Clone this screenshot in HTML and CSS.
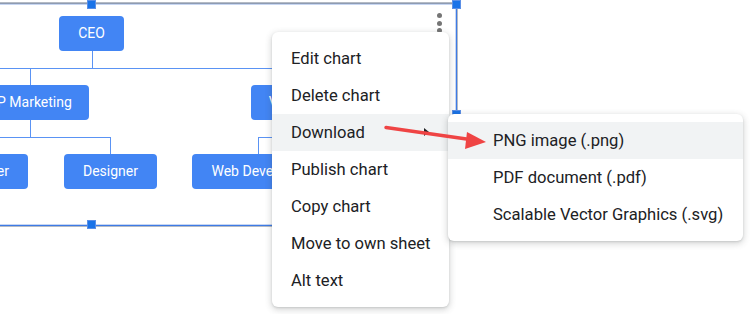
FILE: index.html
```html
<!DOCTYPE html>
<html lang="en">
<head>
    <meta charset="UTF-8">
    <title>Org chart - download menu</title>
    <link rel="stylesheet" href="styles.css">
</head>
<body>

    <div class="canvas">

        <!-- selected chart -->
        <div class="chart">
            <div class="line h" style="left: -300px; top: 68px; width: 640px;"></div>
            <div class="line v" style="left: 92px; top: 50px; height: 18px;"></div>
            <div class="line v" style="left: 30px; top: 68px; height: 17px;"></div>
            <div class="line v" style="left: 30px; top: 119px; height: 18px;"></div>
            <div class="line h" style="left: -60px; top: 137px; width: 171px;"></div>
            <div class="line v" style="left: 110px; top: 137px; height: 17px;"></div>
            <div class="line h" style="left: 258px; top: 137px; width: 120px;"></div>
            <div class="line v" style="left: 258px; top: 137px; height: 17px;"></div>

            <div class="node" style="left: 59px; top: 16px; width: 65px;">CEO</div>
            <div class="node" style="left: -29px; top: 85px; width: 118px;">VP Marketing</div>
            <div class="node" style="left: 251px; top: 85px; width: 130px;">VP Engineering</div>
            <div class="node" style="left: -72px; top: 154px; width: 100px;">Developer</div>
            <div class="node" style="left: 64px; top: 154px; width: 93px;">Designer</div>
            <div class="node" style="left: 192px; top: 154px; width: 132px;">Web Developer</div>

            <div class="frame"></div>
            <div class="handle" style="left: 87px; top: 0;"></div>
            <div class="handle" style="left: 452px; top: 0;"></div>
            <div class="handle" style="left: 452px; top: 110px;"></div>
            <div class="handle" style="left: 87px; top: 220px;"></div>

            <div class="kebab">
                <span></span><span></span><span></span>
            </div>
        </div>

        <!-- chart menu -->
        <ul class="menu">
            <li>Edit chart</li>
            <li>Delete chart</li>
            <li class="active has-sub">Download</li>
            <li>Publish chart</li>
            <li>Copy chart</li>
            <li>Move to own sheet</li>
            <li>Alt text</li>
        </ul>

        <ul class="menu sub">
            <li class="active">PNG image (.png)</li>
            <li>PDF document (.pdf)</li>
            <li>Scalable Vector Graphics (.svg)</li>
        </ul>

        <!-- annotation -->
        <svg class="pointer" width="751" height="314" viewBox="0 0 751 314">
            <line x1="386" y1="127.5" x2="470" y2="139.5" stroke="#ef4444" stroke-width="3.5" stroke-linecap="round"/>
            <polygon points="486,142 467,132 465,149" fill="#ef4444"/>
        </svg>

    </div>

</body>
</html>
```

FILE: styles.css
```css
:root {
    --blue: #4285f4;
    --blue-dark: #1a73e8;
    --line: #5a93f4;
    --text: #202124;
    --hover: #f1f3f4;
}
* {
    margin: 0;
    box-sizing: border-box;
}
body {
    background: #fff;
    overflow: hidden;
    font-family: Roboto, "Liberation Sans", sans-serif;
}
.canvas {
    position: relative;
    width: 751px;
    height: 314px;
    overflow: hidden;
}

/* chart */
.chart {
    position: absolute;
    inset: 0;
}
.frame {
    position: absolute;
    left: -275px;
    top: 3px;
    width: 732px;
    height: 223px;
    border: 1px solid #3d7be6;
    border-top-color: #8d9bb3;
    box-shadow: 0 0 0 1px #b4bac4, inset 0 0 0 1px #c7d6f2;
}
.line {
    position: absolute;
    background: var(--line);
}
.line.h {
    height: 1px;
}
.line.v {
    width: 1px;
}
.node {
    position: absolute;
    height: 35px;
    border-radius: 4px;
    background: var(--blue);
    color: #fff;
    font-size: 14px;
    line-height: 35px;
    text-align: center;
    white-space: nowrap;
}
.handle {
    position: absolute;
    width: 9px;
    height: 9px;
    background: var(--blue-dark);
    border: 1px solid #5b8fe6;
}
.kebab {
    position: absolute;
    left: 437px;
    top: 13px;
    display: flex;
    flex-direction: column;
    gap: 2.5px;
}
.kebab span {
    width: 5px;
    height: 5px;
    border-radius: 50%;
    background: #757575;
}

/* menus */
.menu {
    position: absolute;
    left: 272px;
    top: 32px;
    width: 177px;
    padding: 8px 0;
    list-style: none;
    background: #fff;
    border-radius: 6px;
    box-shadow: 0 2px 6px 1px rgba(60, 64, 67, .2), 0 1px 2px rgba(60, 64, 67, .15);
}
.menu li {
    position: relative;
    height: 37px;
    padding-left: 19px;
    line-height: 37px;
    font-size: 16.6px;
    color: var(--text);
    white-space: nowrap;
}
.menu li.active {
    background: var(--hover);
}
.menu li.has-sub::after {
    content: "";
    position: absolute;
    right: 20px;
    top: 14px;
    border-left: 5px solid #202124;
    border-top: 4.5px solid transparent;
    border-bottom: 4.5px solid transparent;
}
.menu.sub {
    left: 448px;
    top: 114px;
    width: 295px;
}
.menu.sub li {
    padding-left: 45px;
}

.pointer {
    position: absolute;
    left: 0;
    top: 0;
    pointer-events: none;
}
```
